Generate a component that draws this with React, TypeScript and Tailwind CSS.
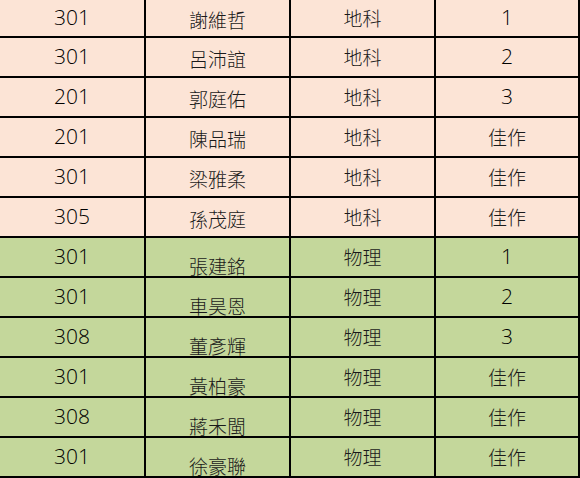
import React from 'react';

type Row = { cls: string; name: string; subject: string; place: string };

const rows: Row[] = [
  { cls: '301', name: '謝維哲', subject: '地科', place: '1' },
  { cls: '301', name: '呂沛誼', subject: '地科', place: '2' },
  { cls: '201', name: '郭庭佑', subject: '地科', place: '3' },
  { cls: '201', name: '陳品瑞', subject: '地科', place: '佳作' },
  { cls: '301', name: '梁雅柔', subject: '地科', place: '佳作' },
  { cls: '305', name: '孫茂庭', subject: '地科', place: '佳作' },
  { cls: '301', name: '張建銘', subject: '物理', place: '1' },
  { cls: '301', name: '車昊恩', subject: '物理', place: '2' },
  { cls: '308', name: '董彥輝', subject: '物理', place: '3' },
  { cls: '301', name: '黃柏豪', subject: '物理', place: '佳作' },
  { cls: '308', name: '蔣禾閩', subject: '物理', place: '佳作' },
  { cls: '301', name: '徐豪聯', subject: '物理', place: '佳作' },
];

const latin = "font-['Open_Sans','Liberation_Sans',sans-serif] font-light text-black";
const cjk = "font-['Noto_Sans_CJK_TC','Noto_Sans_CJK_SC',sans-serif] font-light text-[#1a1a1a]";

export default function App() {
  return (
    <div className="w-[580px] h-[478px] overflow-hidden bg-white">
      {rows.map((r, i) => {
        const green = r.subject === '物理';
        const bg = green ? 'bg-[#c4d79b]' : 'bg-[#fce4d6]';
        const h = i === 0 ? 'h-[38px]' : 'h-[40px]';
        return (
          <div
            key={i}
            className={`grid grid-cols-[146px_145px_145px_144px] ${h} ${bg} border-b-2 border-black`}
          >
            <div className={`flex items-center justify-center border-r-2 border-black pb-[2px] text-[21px] leading-none ${latin}`}>
              {r.cls}
            </div>
            <div
              className={`flex items-center justify-center border-r-2 border-black text-[19px] leading-none ${cjk} ${
                green ? 'pt-[16px]' : 'pt-[3px]'
              }`}
            >
              {r.name}
            </div>
            <div className={`flex items-center justify-center border-r-2 border-black pb-[2px] text-[19px] leading-none ${cjk}`}>
              {r.subject}
            </div>
            <div
              className={`flex items-center justify-center border-r-2 border-black pb-[2px] leading-none ${
                r.place === '佳作' ? `text-[19px] ${cjk}` : `text-[21px] ${latin}`
              }`}
            >
              {r.place}
            </div>
          </div>
        );
      })}
    </div>
  );
}
